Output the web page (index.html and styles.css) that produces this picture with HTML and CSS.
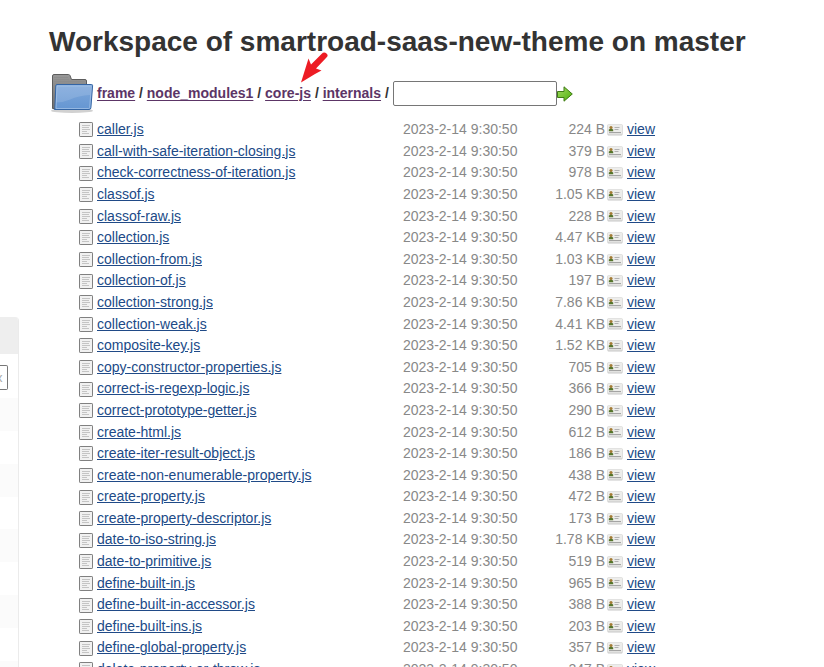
FILE: index.html
```
<!DOCTYPE html>
<html lang="en">
<head>
<meta charset="utf-8">
<title>Workspace of smartroad-saas-new-theme on master</title>
<link rel="stylesheet" href="styles.css">
</head>
<body>
<svg width="0" height="0" class="defs">
  <defs>
    <linearGradient id="blue" x1="0" y1="0" x2="0" y2="1"><stop offset="0" stop-color="#7fa8db"/><stop offset="1" stop-color="#6596d2"/></linearGradient>
    <linearGradient id="gray" x1="0" y1="0" x2="0" y2="1"><stop offset="0" stop-color="#989898"/><stop offset="1" stop-color="#707070"/></linearGradient>
    <linearGradient id="green" x1="0" y1="0" x2="1" y2="1"><stop offset="0" stop-color="#a4dc62"/><stop offset="1" stop-color="#4bad0a"/></linearGradient>
  </defs>
  <symbol id="file" viewBox="0 0 14 15">
    <rect x=".5" y=".5" width="13" height="14" rx=".6" fill="#f1f1f1" stroke="#808080"/>
    <path d="M3 3.500h8M3 5.500h7M3 7.500h8M3 9.500h5M3 11.500h7" stroke="#c4c4c4"/>
  </symbol>
  <symbol id="card" viewBox="0 0 16 12">
    <rect x=".5" y="1" width="15" height="10.500" rx="1" fill="#c8c8c8"/>
    <rect x=".5" y=".5" width="15" height="9.800" rx="1" fill="#ededeb" stroke="#dadad8" stroke-width=".7"/>
    <circle cx="4" cy="3.500" r="1.600" fill="#a47b35"/>
    <path d="M1.800 7.200V5.500q2.200-1.600 4.400 0V7.200z" fill="#55742b"/>
    <path d="M7.500 3.500h5M7.500 5.500h4" stroke="#b0b0b0"/>
    <path d="M2 8.600h12" stroke="#9c9c9c"/>
  </symbol>
</svg>
<div class="page">
  <aside class="panel">
    <div class="panel-head"></div>
    <div class="panel-field"><div class="field">x</div></div>
    <div class="stripes"></div>
  </aside>
  <main class="main">
    <h1>Workspace of smartroad-saas-new-theme on master</h1>
    <div class="crumbs">
      <svg class="folder" width="44" height="40" viewBox="0 0 44 40">
        <ellipse cx="22" cy="36.700" rx="21" ry="2.300" fill="#000" opacity=".18"/>
        <path d="M2.500 34.500V2q0-1.500 1.500-1.500h14.500q1 0 1.500 1l1.500 4h13.500q1.500 0 1.500 1.500v27.500z" fill="url(#gray)" stroke="#5d5d5d"/>
        <path d="M4 3.500h14M4 5.500h15M4 7.500h31M4 9.500h31" stroke="#8b8b8b" stroke-width=".8"/>
        <path d="M5.800 11.500q.1-1 1.200-1h34.500q1.200 0 1.100 1.200l-1.700 22q-.1 1.800-1.800 1.800H4.300q1-.5 .6-1.700z" fill="url(#blue)" stroke="#3465a4"/>
        <path d="M6.800 12.500q0-1 .8-1h33.200l-.6 9.500q-12 .5-20 4.500-7 3-14.200 3z" fill="#fff" opacity=".13"/>
        <path d="M7 12h34.300l-1.600 21.500q-.1 1-1 1H6z" fill="none" stroke="#a9c5e8" stroke-width=".7"/>
      </svg>
      <div class="path"><a href="#">frame</a> / <a href="#">node_modules1</a> / <a href="#">core-js</a> / <a href="#">internals</a> /</div>
      <input type="text" class="pattern" aria-label="Pattern">
      <svg class="go" width="16" height="16" viewBox="0 0 16 16"><path d="M.5 5.500h6.500V.8l8.300 7.200L7 15.200V11.500H.5z" fill="url(#green)" stroke="#3f7b14"/></svg>
      <svg class="pointer" width="28" height="31" viewBox="0 0 28 31"><path d="M1 30.500 8.500 6.500 11 12.500 21.500 2Q24-.5 26.500 1.500T26 6L16 16.500 21.500 18.500 15 22z" fill="#ed1c24"/></svg>
    </div>
    <div class="files">
      <div class="row"><svg class="doc"><use href="#file"/></svg><a href="#">caller.js</a><time>2023-2-14 9:30:50</time><span>224 B</span><svg class="card"><use href="#card"/></svg><a href="#">view</a></div>
      <div class="row"><svg class="doc"><use href="#file"/></svg><a href="#">call-with-safe-iteration-closing.js</a><time>2023-2-14 9:30:50</time><span>379 B</span><svg class="card"><use href="#card"/></svg><a href="#">view</a></div>
      <div class="row"><svg class="doc"><use href="#file"/></svg><a href="#">check-correctness-of-iteration.js</a><time>2023-2-14 9:30:50</time><span>978 B</span><svg class="card"><use href="#card"/></svg><a href="#">view</a></div>
      <div class="row"><svg class="doc"><use href="#file"/></svg><a href="#">classof.js</a><time>2023-2-14 9:30:50</time><span>1.05 KB</span><svg class="card"><use href="#card"/></svg><a href="#">view</a></div>
      <div class="row"><svg class="doc"><use href="#file"/></svg><a href="#">classof-raw.js</a><time>2023-2-14 9:30:50</time><span>228 B</span><svg class="card"><use href="#card"/></svg><a href="#">view</a></div>
      <div class="row"><svg class="doc"><use href="#file"/></svg><a href="#">collection.js</a><time>2023-2-14 9:30:50</time><span>4.47 KB</span><svg class="card"><use href="#card"/></svg><a href="#">view</a></div>
      <div class="row"><svg class="doc"><use href="#file"/></svg><a href="#">collection-from.js</a><time>2023-2-14 9:30:50</time><span>1.03 KB</span><svg class="card"><use href="#card"/></svg><a href="#">view</a></div>
      <div class="row"><svg class="doc"><use href="#file"/></svg><a href="#">collection-of.js</a><time>2023-2-14 9:30:50</time><span>197 B</span><svg class="card"><use href="#card"/></svg><a href="#">view</a></div>
      <div class="row"><svg class="doc"><use href="#file"/></svg><a href="#">collection-strong.js</a><time>2023-2-14 9:30:50</time><span>7.86 KB</span><svg class="card"><use href="#card"/></svg><a href="#">view</a></div>
      <div class="row"><svg class="doc"><use href="#file"/></svg><a href="#">collection-weak.js</a><time>2023-2-14 9:30:50</time><span>4.41 KB</span><svg class="card"><use href="#card"/></svg><a href="#">view</a></div>
      <div class="row"><svg class="doc"><use href="#file"/></svg><a href="#">composite-key.js</a><time>2023-2-14 9:30:50</time><span>1.52 KB</span><svg class="card"><use href="#card"/></svg><a href="#">view</a></div>
      <div class="row"><svg class="doc"><use href="#file"/></svg><a href="#">copy-constructor-properties.js</a><time>2023-2-14 9:30:50</time><span>705 B</span><svg class="card"><use href="#card"/></svg><a href="#">view</a></div>
      <div class="row"><svg class="doc"><use href="#file"/></svg><a href="#">correct-is-regexp-logic.js</a><time>2023-2-14 9:30:50</time><span>366 B</span><svg class="card"><use href="#card"/></svg><a href="#">view</a></div>
      <div class="row"><svg class="doc"><use href="#file"/></svg><a href="#">correct-prototype-getter.js</a><time>2023-2-14 9:30:50</time><span>290 B</span><svg class="card"><use href="#card"/></svg><a href="#">view</a></div>
      <div class="row"><svg class="doc"><use href="#file"/></svg><a href="#">create-html.js</a><time>2023-2-14 9:30:50</time><span>612 B</span><svg class="card"><use href="#card"/></svg><a href="#">view</a></div>
      <div class="row"><svg class="doc"><use href="#file"/></svg><a href="#">create-iter-result-object.js</a><time>2023-2-14 9:30:50</time><span>186 B</span><svg class="card"><use href="#card"/></svg><a href="#">view</a></div>
      <div class="row"><svg class="doc"><use href="#file"/></svg><a href="#">create-non-enumerable-property.js</a><time>2023-2-14 9:30:50</time><span>438 B</span><svg class="card"><use href="#card"/></svg><a href="#">view</a></div>
      <div class="row"><svg class="doc"><use href="#file"/></svg><a href="#">create-property.js</a><time>2023-2-14 9:30:50</time><span>472 B</span><svg class="card"><use href="#card"/></svg><a href="#">view</a></div>
      <div class="row"><svg class="doc"><use href="#file"/></svg><a href="#">create-property-descriptor.js</a><time>2023-2-14 9:30:50</time><span>173 B</span><svg class="card"><use href="#card"/></svg><a href="#">view</a></div>
      <div class="row"><svg class="doc"><use href="#file"/></svg><a href="#">date-to-iso-string.js</a><time>2023-2-14 9:30:50</time><span>1.78 KB</span><svg class="card"><use href="#card"/></svg><a href="#">view</a></div>
      <div class="row"><svg class="doc"><use href="#file"/></svg><a href="#">date-to-primitive.js</a><time>2023-2-14 9:30:50</time><span>519 B</span><svg class="card"><use href="#card"/></svg><a href="#">view</a></div>
      <div class="row"><svg class="doc"><use href="#file"/></svg><a href="#">define-built-in.js</a><time>2023-2-14 9:30:50</time><span>965 B</span><svg class="card"><use href="#card"/></svg><a href="#">view</a></div>
      <div class="row"><svg class="doc"><use href="#file"/></svg><a href="#">define-built-in-accessor.js</a><time>2023-2-14 9:30:50</time><span>388 B</span><svg class="card"><use href="#card"/></svg><a href="#">view</a></div>
      <div class="row"><svg class="doc"><use href="#file"/></svg><a href="#">define-built-ins.js</a><time>2023-2-14 9:30:50</time><span>203 B</span><svg class="card"><use href="#card"/></svg><a href="#">view</a></div>
      <div class="row"><svg class="doc"><use href="#file"/></svg><a href="#">define-global-property.js</a><time>2023-2-14 9:30:50</time><span>357 B</span><svg class="card"><use href="#card"/></svg><a href="#">view</a></div>
      <div class="row"><svg class="doc"><use href="#file"/></svg><a href="#">delete-property-or-throw.js</a><time>2023-2-14 9:30:50</time><span>247 B</span><svg class="card"><use href="#card"/></svg><a href="#">view</a></div>
    </div>
  </main>
</div>
</body>
</html>
```
FILE: styles.css
```
* { box-sizing: border-box; }
body {
  margin: 0;
  height: 667px;
  overflow: hidden;
  background: #fff;
  color: #333;
  font: 14px/21.59px "Liberation Sans", Arial, sans-serif;
}
.defs { position: absolute; }
.page { display: flex; height: 667px; overflow: hidden; }
.panel {
  width: 19px;
  margin-top: 317px;
  border-right: 1px solid #ebebeb;
  border-top-right-radius: 4px;
  overflow: hidden;
  flex: none;
}
.panel-head { height: 37px; background: #eee; }
.panel-field { height: 44px; padding-top: 11px; }
.field {
  width: 8px;
  height: 25px;
  border: 1px solid #777;
  border-left: 0;
  border-radius: 0 2px 2px 0;
  color: #aaa;
  font-size: 13px;
  line-height: 23px;
  text-indent: -4px;
  overflow: hidden;
}
.stripes {
  height: 300px;
  background: repeating-linear-gradient(#fbfbfb 0 33px, #fff 33px 65.7px);
}
.main { flex: 1; padding: 25px 0 0 30px; min-width: 0; }
h1 {
  margin: 0;
  font-size: 28px;
  line-height: 34px;
  font-weight: bold;
  white-space: nowrap;
}
.crumbs {
  position: relative;
  display: flex;
  align-items: center;
  height: 42px;
  margin-top: 14px;
  padding-left: 1px;
  font-weight: bold;
}
.path { width: 296px; margin-left: 3px; white-space: nowrap; }
.crumbs a { color: #5c3566; text-underline-offset: 2px; }
.pattern {
  width: 164px;
  height: 25px;
  margin: 0 0 2px;
  border: 1px solid #767676;
  border-radius: 2px;
  background: #fff;
}
.pointer { position: absolute; left: 251px; top: -21px; }
.files { margin-top: 4.2px; padding-left: 30px; }
.row {
  display: grid;
  grid-template-columns: 18px 306px 142px 60px 22px auto;
  align-items: center;
  height: 21.6px;
  color: #888;
  white-space: nowrap;
}
.row a { color: #204a87; justify-self: start; }
.row span { text-align: right; }
.doc { width: 14px; height: 15px; }
.card { width: 16px; height: 12px; margin-left: 2px; }
a { text-decoration: underline; }
```
